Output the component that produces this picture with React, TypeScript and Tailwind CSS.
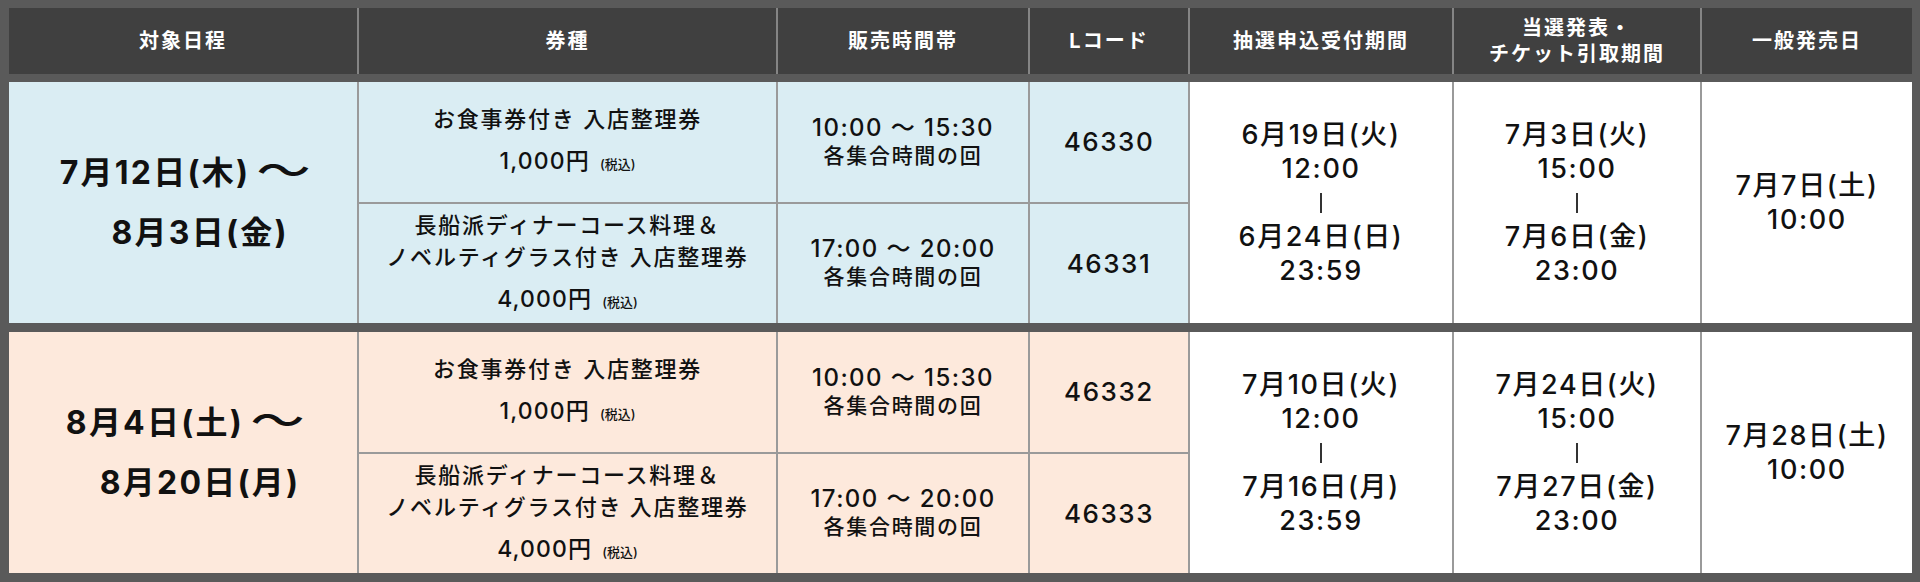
const COLS = 'grid grid-cols-[348px_417px_250px_158px_262px_246px_1fr]'
const FONT = 'font-[family-name:Inter,"Noto_Sans_CJK_JP",sans-serif]'

type Ticket = {
  title: string[]
  price: string
  time: string
  code: string
}

type Group = {
  bg: string
  from: string
  to: string
  tickets: [Ticket, Ticket]
  lottery: [string, string, string, string]
  result: [string, string, string, string]
  sale: [string, string]
}

const lunch = (code: string): Ticket => ({
  title: ['お食事券付き 入店整理券'],
  price: '1,000円',
  time: '10:00 〜 15:30',
  code,
})

const dinner = (code: string): Ticket => ({
  title: ['長船派ディナーコース料理＆', 'ノベルティグラス付き 入店整理券'],
  price: '4,000円',
  time: '17:00 〜 20:00',
  code,
})

const groups: Group[] = [
  {
    bg: 'bg-[#daedf3]',
    from: '7月12日(木)',
    to: '　8月3日(金)',
    tickets: [lunch('46330'), dinner('46331')],
    lottery: ['6月19日(火)', '12:00', '6月24日(日)', '23:59'],
    result: ['7月3日(火)', '15:00', '7月6日(金)', '23:00'],
    sale: ['7月7日(土)', '10:00'],
  },
  {
    bg: 'bg-[#fde9dc]',
    from: '8月4日(土)',
    to: '　8月20日(月)',
    tickets: [lunch('46332'), dinner('46333')],
    lottery: ['7月10日(火)', '12:00', '7月16日(月)', '23:59'],
    result: ['7月24日(火)', '15:00', '7月27日(金)', '23:00'],
    sale: ['7月28日(土)', '10:00'],
  },
]

function Period({ lines }: { lines: string[] }) {
  return (
    <div className="flex flex-col items-center justify-center bg-white text-[27px] leading-[34px] tracking-[0.06em] font-medium">
      <div>{lines[0]}</div>
      <div>{lines[1]}</div>
      <div className="flex h-[34px] items-center">
        <div className="h-[20px] w-[1.5px] bg-[#333]" />
      </div>
      <div>{lines[2]}</div>
      <div>{lines[3]}</div>
    </div>
  )
}

function TicketCells({ t, bg }: { t: Ticket; bg: string }) {
  return (
    <>
      <div className={`${bg} flex flex-col items-center justify-center text-center font-medium`}>
        {t.title.map((line) => (
          <div key={line} className="text-[22px] leading-[32px] tracking-[0.08em]">{line}</div>
        ))}
        <div className="mt-[10px] text-[23px] leading-[32px] tracking-[0.05em]">
          {t.price}
          <span className="ml-[10px] text-[13px] tracking-normal">(税込)</span>
        </div>
      </div>
      <div className={`${bg} flex flex-col items-center justify-center font-medium`}>
        <div className="text-[24px] leading-[28px] tracking-[0.06em]">{t.time}</div>
        <div className="text-[21px] leading-[28px] tracking-[0.08em]">各集合時間の回</div>
      </div>
      <div className={`${bg} flex items-center justify-center text-[26px] font-medium tracking-[0.06em]`}>
        {t.code}
      </div>
    </>
  )
}

function GroupRow({ g, className }: { g: Group; className?: string }) {
  return (
    <div className={`${COLS} h-[241px] grid-rows-2 gap-[2px] bg-[#9a9a9a] ${className ?? ''}`}>
      <div className={`${g.bg} row-span-2 flex flex-col items-center justify-center text-[32px] leading-[60px] tracking-[0.07em] font-bold`}>
        <div>
          {g.from}{' '}
          <span className="ml-[4px] inline-block scale-x-[1.35] align-[-1px] text-[40px] leading-[40px] font-medium">〜</span>
        </div>
        <div>{g.to}</div>
      </div>
      <TicketCells t={g.tickets[0]} bg={g.bg} />
      <div className="row-span-2 grid">
        <Period lines={g.lottery} />
      </div>
      <div className="row-span-2 grid">
        <Period lines={g.result} />
      </div>
      <div className="row-span-2 flex flex-col items-center justify-center bg-white text-[27px] leading-[34px] tracking-[0.06em] font-medium">
        <div>{g.sale[0]}</div>
        <div>{g.sale[1]}</div>
      </div>
      <TicketCells t={g.tickets[1]} bg={g.bg} />
    </div>
  )
}

const heads = ['対象日程', '券種', '販売時間帯', 'Lコード', '抽選申込受付期間', null, '一般発売日']

export default function App() {
  return (
    <div className={`${FONT} w-[1920px] h-[582px] bg-[#5a5a5a] pt-[8px] pb-[9px] pl-[9px] pr-[8px] text-[#111]`}>
      <div className={`${COLS} h-[66px] gap-x-[2px] bg-[#858585]`}>
        {heads.map((h, i) => (
          <div
            key={i}
            className="flex flex-col items-center justify-center bg-[#404040] text-center text-[20px] font-bold tracking-[0.1em] text-white"
          >
            {h ?? (
              <>
                <div className="leading-[26px]">当選発表・</div>
                <div className="leading-[26px]">チケット引取期間</div>
              </>
            )}
          </div>
        ))}
      </div>
      <GroupRow g={groups[0]} className="mt-[8px]" />
      <GroupRow g={groups[1]} className="mt-[9px]" />
    </div>
  )
}
